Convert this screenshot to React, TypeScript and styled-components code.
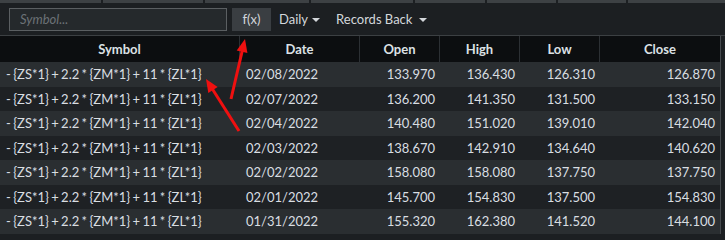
import { FC } from 'react';
import styled, { createGlobalStyle } from 'styled-components';

const GlobalStyle = createGlobalStyle`
  html, body {
    margin: 0;
    padding: 0;
    background: #1c1f22;
    font-family: Lato, "Open Sans", sans-serif;
    color: #d9dee2;
  }
`;

interface Quote {
  date: string;
  open: string;
  high: string;
  low: string;
  close: string;
}

const SYMBOL = '- {ZS*1} + 2.2 * {ZM*1} + 11 * {ZL*1}';

const quotes: Quote[] = [
  { date: '02/08/2022', open: '133.970', high: '136.430', low: '126.310', close: '126.870' },
  { date: '02/07/2022', open: '136.200', high: '141.350', low: '131.500', close: '133.150' },
  { date: '02/04/2022', open: '140.480', high: '151.020', low: '139.010', close: '142.040' },
  { date: '02/03/2022', open: '138.670', high: '142.910', low: '134.640', close: '140.620' },
  { date: '02/02/2022', open: '158.080', high: '158.080', low: '137.750', close: '137.750' },
  { date: '02/01/2022', open: '145.700', high: '154.830', low: '137.500', close: '154.830' },
  { date: '01/31/2022', open: '155.320', high: '162.380', low: '141.520', close: '144.100' },
];

const tabWidths = [101, 100, 104, 102, 70, 69, 68, 99];

const arrows = [
  { x1: 231, y1: 99, x2: 245, y2: 39 },
  { x1: 239, y1: 131, x2: 206, y2: 79 },
];

const headPoints = (a: { x1: number; y1: number; x2: number; y2: number }) => {
  const dx = a.x2 - a.x1;
  const dy = a.y2 - a.y1;
  const len = Math.sqrt(dx * dx + dy * dy);
  const ux = dx / len;
  const uy = dy / len;
  const bx = a.x2 - ux * 13;
  const by = a.y2 - uy * 13;
  const px = -uy * 5.5;
  const py = ux * 5.5;
  return `${a.x2},${a.y2} ${bx + px},${by + py} ${bx - px},${by - py}`;
};

const App: FC = () => {
  return (
    <Page>
      <GlobalStyle />
      <TabStrip>
        {tabWidths.map((w, i) => (
          <Tab key={i} $width={w} />
        ))}
      </TabStrip>
      <Toolbar>
        <SymbolInput placeholder="Symbol..." />
        <FxButton>f(x)</FxButton>
        <Dropdown>Daily</Dropdown>
        <Dropdown $wide>Records Back</Dropdown>
      </Toolbar>
      <Grid>
        <HeadRow>
          <HeadCell>Symbol</HeadCell>
          <HeadCell>Date</HeadCell>
          <HeadCell>Open</HeadCell>
          <HeadCell>High</HeadCell>
          <HeadCell>Low</HeadCell>
          <HeadCell>Close</HeadCell>
        </HeadRow>
        {quotes.map((q, i) => (
          <Row key={q.date} $odd={i % 2 === 0}>
            <TextCell $tight>{SYMBOL}</TextCell>
            <TextCell>{q.date}</TextCell>
            <NumCell>{q.open}</NumCell>
            <NumCell>{q.high}</NumCell>
            <NumCell>{q.low}</NumCell>
            <NumCell>{q.close}</NumCell>
          </Row>
        ))}
      </Grid>
      <Overlay width="725" height="240">
        {arrows.map((a, i) => (
          <g key={i}>
            <line
              x1={a.x1}
              y1={a.y1}
              x2={a.x2 - (a.x2 - a.x1) * 0.15}
              y2={a.y2 - (a.y2 - a.y1) * 0.15}
              stroke="#f01010"
              strokeWidth="3"
            />
            <polygon points={headPoints(a)} fill="#f01010" />
          </g>
        ))}
      </Overlay>
    </Page>
  );
};

export default App;

const Page = styled.div`
  position: relative;
  width: 725px;
  height: 240px;
  overflow: hidden;
  background: #1c1f22;
`;

const TabStrip = styled.div`
  display: flex;
  gap: 2px;
  height: 3px;
  background: #1c1f22;
`;

const Tab = styled.div<{ $width: number }>`
  width: ${(p) => p.$width}px;
  flex-shrink: 0;
  background: #3d4144;
`;

const Toolbar = styled.div`
  display: flex;
  align-items: center;
  height: 33px;
  padding: 0 0 0 9px;
  box-sizing: border-box;
  border-bottom: 1px solid #3c4043;
  font-size: 13px;
`;

const SymbolInput = styled.input`
  width: 218px;
  height: 23px;
  box-sizing: border-box;
  margin: 0;
  padding: 0 10px;
  background: #25292c;
  border: 1px solid #5b5f62;
  border-radius: 0;
  outline: none;
  color: #d9dee2;
  font-family: Lato, sans-serif;
  font-size: 13px;

  &::placeholder {
    color: #6c7277;
    font-style: italic;
  }
`;

const FxButton = styled.div`
  display: flex;
  align-items: center;
  justify-content: center;
  width: 39px;
  height: 23px;
  margin-left: 5px;
  background: #3a3e42;
  color: #d3d7db;
`;

const Dropdown = styled.div<{ $wide?: boolean }>`
  display: flex;
  align-items: center;
  gap: ${(p) => (p.$wide ? 7 : 4)}px;
  margin-left: ${(p) => (p.$wide ? 16 : 8)}px;
  color: #d3d7db;

  &::after {
    content: '';
    border-left: 4px solid transparent;
    border-right: 4px solid transparent;
    border-top: 4px solid #d3d7db;
    margin-top: 1px;
  }
`;

const Grid = styled.div`
  width: 721px;
  box-sizing: border-box;
  border-right: 1px solid #45494d;
  font-size: 13px;
`;

const columns = '240px 120px 80px 80px 80px 120px';

const HeadRow = styled.div`
  display: grid;
  grid-template-columns: ${columns};
  height: 26px;
  background: #0c0e10;
`;

const HeadCell = styled.div`
  display: flex;
  align-items: center;
  justify-content: center;
  font-weight: bold;
  color: #dce1e5;
  border-right: 1px solid #2c3034;

  &:last-child {
    border-right: none;
  }
`;

const Row = styled.div<{ $odd: boolean }>`
  display: grid;
  grid-template-columns: ${columns};
  height: 24.5px;
  background: ${(p) => (p.$odd ? '#2a2e31' : '#1e2124')};
`;

const TextCell = styled.div<{ $tight?: boolean }>`
  display: flex;
  align-items: center;
  padding-left: 6px;
  white-space: pre;
  word-spacing: ${(p) => (p.$tight ? '-1px' : '0')};
  color: #d9dee2;
`;

const NumCell = styled.div`
  display: flex;
  align-items: center;
  justify-content: flex-end;
  padding-right: 5px;
  color: #d9dee2;
`;

const Overlay = styled.svg`
  position: absolute;
  left: 0;
  top: 0;
  pointer-events: none;
`;
